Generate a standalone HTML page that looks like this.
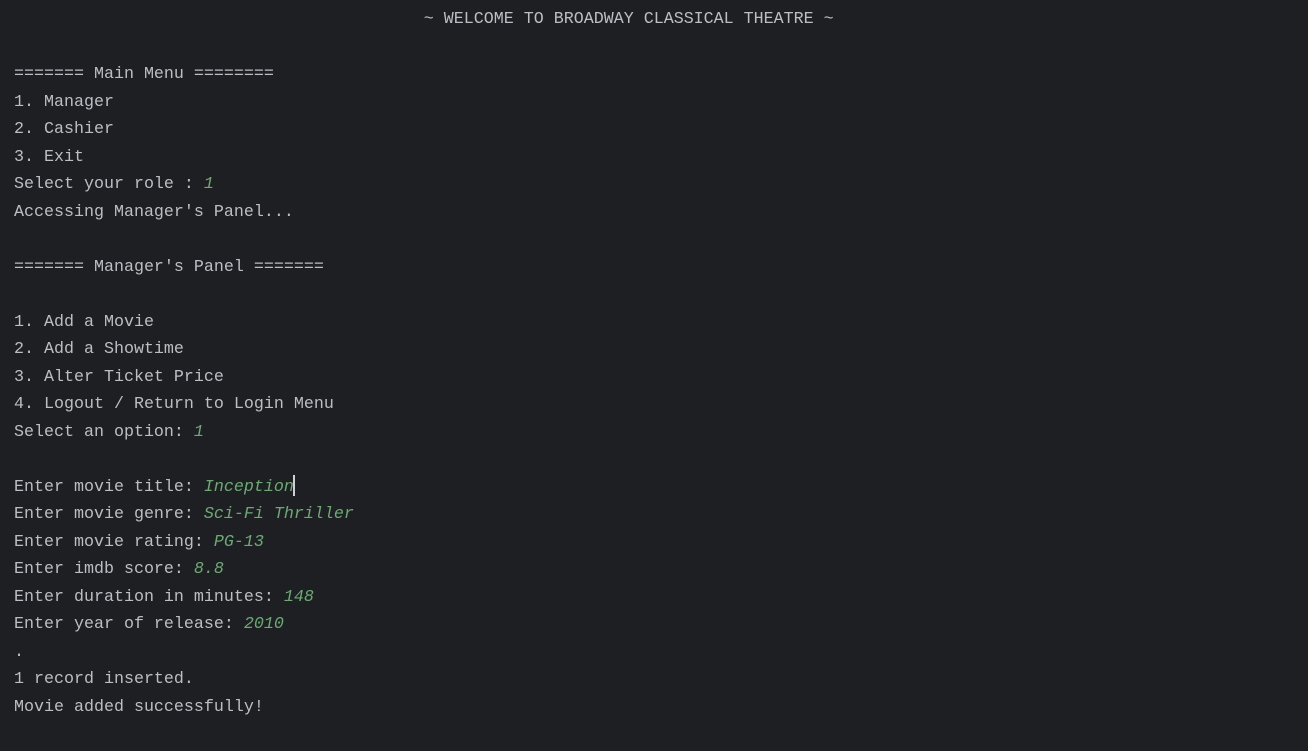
<!DOCTYPE html>
<html><head><meta charset="utf-8"><style>
html,body{margin:0;padding:0;background:#1e1f22;width:1308px;height:751px;overflow:hidden}
pre{margin:0;padding:6px 0 0 14px;font-family:"Liberation Mono","DejaVu Sans Mono",monospace;font-size:16.67px;line-height:27.5px;color:#bcbec4;white-space:pre}
i{color:#6aab73;font-style:italic}
.c{display:inline-block;width:2px;height:21px;background:#ced0d6;vertical-align:-5px;margin-left:-1px}
</style></head><body><pre>                                         ~ WELCOME TO BROADWAY CLASSICAL THEATRE ~

======= Main Menu ========
1. Manager
2. Cashier
3. Exit
Select your role : <i>1</i>
Accessing Manager's Panel...

======= Manager's Panel =======

1. Add a Movie
2. Add a Showtime
3. Alter Ticket Price
4. Logout / Return to Login Menu
Select an option: <i>1</i>

Enter movie title: <i>Inception</i><span class="c"></span>
Enter movie genre: <i>Sci-Fi Thriller</i>
Enter movie rating: <i>PG-13</i>
Enter imdb score: <i>8.8</i>
Enter duration in minutes: <i>148</i>
Enter year of release: <i>2010</i>
.
1 record inserted.
Movie added successfully!</pre></body></html>
